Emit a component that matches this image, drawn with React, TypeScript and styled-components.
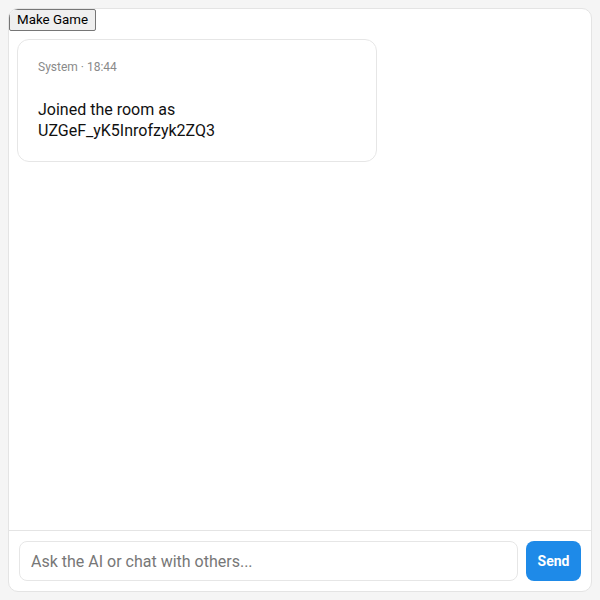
import React, { useState } from "react";
import styled, { createGlobalStyle } from "styled-components";

const GlobalStyle = createGlobalStyle`
  html, body {
    margin: 0;
    padding: 0;
    background: #f5f5f5;
  }
  body {
    padding: 8px;
    font-family: Roboto, "Noto Sans", sans-serif;
    box-sizing: border-box;
  }
  *, *::before, *::after {
    box-sizing: border-box;
  }
`;

const ChatWindow = styled.div`
  height: 584px;
  background: #fff;
  border: 1px solid #e4e4e4;
  border-radius: 10px;
  display: flex;
  flex-direction: column;
  overflow: hidden;
`;

const MakeGameButton = styled.button`
  align-self: flex-start;
  font-family: Roboto, sans-serif;
  font-size: 13.33px;
  line-height: 16px;
  color: #000;
  background: #efefef;
  border: 1px solid #767676;
  border-radius: 2px;
  padding: 2px 7px 2px;
  cursor: pointer;
`;

const MessageList = styled.div`
  flex: 1;
  padding: 8px;
  overflow-y: auto;
`;

const MessageCard = styled.div`
  width: 360px;
  border: 1px solid #e6e6e6;
  border-radius: 12px;
  padding: 19px 20px 20px;
`;

const Meta = styled.div`
  font-size: 12px;
  line-height: 16px;
  color: #8a8a8a;
  margin-bottom: 24px;
`;

const MessageText = styled.div`
  font-size: 16px;
  line-height: 21px;
  color: #111;
`;

const Composer = styled.form`
  display: flex;
  gap: 8px;
  padding: 10px;
  border-top: 1px solid #e4e4e4;
`;

const Input = styled.input`
  flex: 1;
  height: 40px;
  border: 1px solid #e6e6e6;
  border-radius: 8px;
  padding: 0 11px;
  font-family: Roboto, sans-serif;
  font-size: 16px;
  color: #111;
  outline: none;

  &::placeholder {
    color: #777;
  }
`;

const SendButton = styled.button`
  width: 55px;
  height: 40px;
  border: none;
  border-radius: 8px;
  background: #1e8ae8;
  color: #fff;
  font-family: Roboto, sans-serif;
  font-size: 14px;
  font-weight: 700;
  cursor: pointer;
`;

const App: React.FC = () => {
  const [text, setText] = useState("");

  return (
    <>
      <GlobalStyle />
      <ChatWindow>
        <MakeGameButton type="button">Make Game</MakeGameButton>
        <MessageList>
          <MessageCard>
            <Meta>System · 18:44</Meta>
            <MessageText>Joined the room as UZGeF_yK5Inrofzyk2ZQ3</MessageText>
          </MessageCard>
        </MessageList>
        <Composer onSubmit={(e) => e.preventDefault()}>
          <Input
            value={text}
            onChange={(e) => setText(e.target.value)}
            placeholder="Ask the AI or chat with others..."
          />
          <SendButton type="submit">Send</SendButton>
        </Composer>
      </ChatWindow>
    </>
  );
};

export default App;
